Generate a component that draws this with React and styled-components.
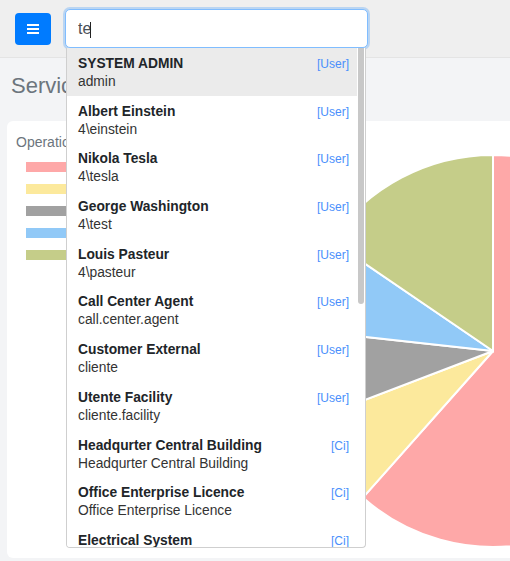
import styled, { createGlobalStyle } from 'styled-components';

const GlobalStyle = createGlobalStyle`
  body {
    margin: 0;
    background: #f3f4f6;
    font-family: "Liberation Sans", Arial, sans-serif;
    overflow: hidden;
  }
`;

const results = [
  { name: 'SYSTEM ADMIN', sub: 'admin', kind: 'User' },
  { name: 'Albert Einstein', sub: '4\\einstein', kind: 'User' },
  { name: 'Nikola Tesla', sub: '4\\tesla', kind: 'User' },
  { name: 'George Washington', sub: '4\\test', kind: 'User' },
  { name: 'Louis Pasteur', sub: '4\\pasteur', kind: 'User' },
  { name: 'Call Center Agent', sub: 'call.center.agent', kind: 'User' },
  { name: 'Customer External', sub: 'cliente', kind: 'User' },
  { name: 'Utente Facility', sub: 'cliente.facility', kind: 'User' },
  { name: 'Headqurter Central Building', sub: 'Headqurter Central Building', kind: 'Ci' },
  { name: 'Office Enterprise Licence', sub: 'Office Enterprise Licence', kind: 'Ci' },
  { name: 'Electrical System', sub: 'Electrical System', kind: 'Ci' },
];

// slice sizes in degrees, clockwise from 12 o'clock
const slices = [
  { value: 221.6, color: '#fea8a8' },
  { value: 27.5, color: '#fce99c' },
  { value: 27.2, color: '#a1a1a1' },
  { value: 28.0, color: '#91c9f7' },
  { value: 55.7, color: '#c5cd89' },
];

function slicePath(cx, cy, r, from, to) {
  const rad = (d) => ((d - 90) * Math.PI) / 180;
  const x1 = cx + r * Math.cos(rad(from));
  const y1 = cy + r * Math.sin(rad(from));
  const x2 = cx + r * Math.cos(rad(to));
  const y2 = cy + r * Math.sin(rad(to));
  const large = to - from > 180 ? 1 : 0;
  return `M${cx},${cy} L${x1},${y1} A${r},${r} 0 ${large} 1 ${x2},${y2} Z`;
}

function Pie() {
  let start = 0;
  return (
    <ChartSvg width="400" height="400" viewBox="0 0 400 400">
      {slices.map((s, i) => {
        const d = slicePath(200, 200, 196, start, start + s.value);
        start += s.value;
        return <path key={i} d={d} fill={s.color} stroke="#fff" strokeWidth="2" />;
      })}
    </ChartSvg>
  );
}

export default function App() {
  return (
    <>
      <GlobalStyle />
      <TopBar>
        <MenuButton>
          <svg width="12" height="10" viewBox="0 0 12 10">
            <rect x="0" y="0" width="12" height="2" fill="#fff" />
            <rect x="0" y="4" width="12" height="2" fill="#fff" />
            <rect x="0" y="8" width="12" height="2" fill="#fff" />
          </svg>
        </MenuButton>
        <SearchBox>
          <SearchInput defaultValue="te" />
          <Caret />
          <Dropdown>
            <ResultList>
              {results.map((r, i) => (
                <ResultItem key={i} $active={i === 0}>
                  <ResultText>
                    <ResultName>{r.name}</ResultName>
                    <ResultSub>{r.sub}</ResultSub>
                  </ResultText>
                  <ResultKind>[{r.kind}]</ResultKind>
                </ResultItem>
              ))}
            </ResultList>
            <ScrollRail>
              <ScrollThumb />
            </ScrollRail>
          </Dropdown>
        </SearchBox>
      </TopBar>
      <Main>
        <PageTitle>Services</PageTitle>
        <Card>
          <LegendColumn>
            <CardHeading>Operations</CardHeading>
            <Legend>
              {slices.map((s, i) => (
                <LegendSwatch key={i} $color={s.color} />
              ))}
            </Legend>
          </LegendColumn>
          <Pie />
        </Card>
      </Main>
    </>
  );
}

const TopBar = styled.header`
  height: 57px;
  display: flex;
  align-items: center;
  gap: 14px;
  padding-left: 15px;
  background: #efefef;
  border-bottom: 1px solid #e4e4e4;
  position: relative;
  z-index: 2;
`;

const MenuButton = styled.button`
  width: 36px;
  height: 32px;
  margin-top: 1px;
  border: none;
  border-radius: 4px;
  background: #007bff;
  display: flex;
  align-items: center;
  justify-content: center;
  padding: 0;
`;

const SearchBox = styled.div`
  position: relative;
  width: 303px;
`;

const SearchInput = styled.input`
  box-sizing: border-box;
  width: 100%;
  height: 39px;
  padding: 0 12px;
  font-family: "Liberation Sans", Arial, sans-serif;
  font-size: 16px;
  color: #495057;
  background: #fff;
  border: 1px solid #80bdff;
  border-radius: 5px;
  box-shadow: 0 0 0 2px rgba(0, 123, 255, 0.22);
  outline: none;
`;

const Caret = styled.span`
  position: absolute;
  left: 25px;
  top: 13px;
  width: 1px;
  height: 16px;
  background: #222;
`;

const Dropdown = styled.div`
  position: absolute;
  top: 100%;
  left: 1px;
  width: 300px;
  height: 500px;
  box-sizing: border-box;
  display: flex;
  overflow: hidden;
  background: #fff;
  border: 1px solid #cfcfcf;
  border-top: none;
  border-radius: 0 0 4px 4px;
`;

const ResultList = styled.div`
  flex: 1;
  min-width: 0;
`;

const ScrollRail = styled.div`
  width: 8px;
  flex-shrink: 0;
  padding-left: 1px;
  box-sizing: border-box;
`;

const ScrollThumb = styled.div`
  width: 6px;
  height: 256px;
  background: #c8c8c8;
  border-radius: 0 0 3px 3px;
`;

const ResultItem = styled.div`
  display: flex;
  justify-content: space-between;
  align-items: flex-start;
  padding: 7px 8px 4.7px 11px;
  background: ${(p) => (p.$active ? '#ebebeb' : '#fff')};
`;

const ResultText = styled.div`
  display: flex;
  flex-direction: column;
`;

const ResultName = styled.span`
  font-size: 13.8px;
  line-height: 18px;
  font-weight: 700;
  color: #212529;
`;

const ResultSub = styled.span`
  font-size: 13.8px;
  line-height: 18px;
  color: #333;
`;

const ResultKind = styled.span`
  font-size: 12px;
  line-height: 18px;
  color: #4a8ffc;
`;

const Main = styled.main`
  padding: 15px 0 0 7px;
`;

const PageTitle = styled.h1`
  margin: 0 0 22px 4px;
  font-size: 22px;
  line-height: 26px;
  font-weight: 400;
  color: #6c757d;
`;

const Card = styled.section`
  width: 700px;
  height: 437px;
  box-sizing: border-box;
  display: flex;
  padding: 12px 9px;
  background: #fff;
  border-radius: 6px;
`;

const LegendColumn = styled.div`
  width: 277px;
  flex-shrink: 0;
`;

const CardHeading = styled.div`
  font-size: 14px;
  line-height: 18px;
  color: #6c757d;
`;

const Legend = styled.div`
  display: flex;
  flex-direction: column;
  gap: 12px;
  margin: 11px 0 0 10px;
`;

const LegendSwatch = styled.div`
  width: 40px;
  height: 10px;
  background: ${(p) => p.$color};
`;

const ChartSvg = styled.svg`
  flex-shrink: 0;
  margin-top: 18px;
`;
